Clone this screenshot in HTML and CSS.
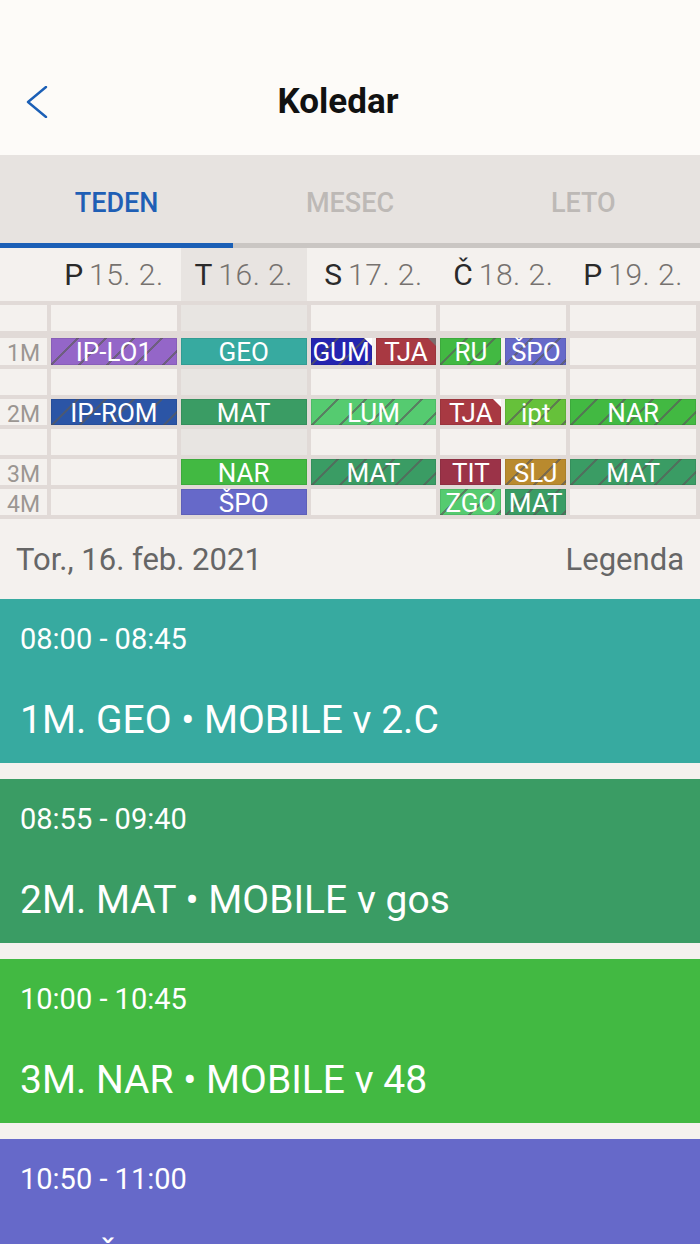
FILE: index.html
```html
<!DOCTYPE html>
<html lang="sl">
<head>
<meta charset="utf-8">
<title>Koledar</title>
<link rel="stylesheet" href="styles.css">
</head>
<body>
<div class="screen">
  <header class="appbar">
    <svg class="back" viewBox="0 0 22 32" width="22" height="32" aria-hidden="true"><path d="M20 1 L2 16 L20 31" fill="none" stroke="#1b5fb6" stroke-width="2.4" stroke-linecap="round" stroke-linejoin="round"/></svg>
    <h1 class="title">Koledar</h1>
  </header>

  <nav class="tabs">
    <div class="tab active">TEDEN</div>
    <div class="tab">MESEC</div>
    <div class="tab">LETO</div>
  </nav>
  <div class="indicator"><div class="indicator-bar"></div></div>

  <div class="days">
    <div class="day-spacer"></div>
    <div class="day"><b>P</b> <span>15. 2.</span></div>
    <div class="day selected"><b>T</b> <span>16. 2.</span></div>
    <div class="day"><b>S</b> <span>17. 2.</span></div>
    <div class="day"><b>Č</b> <span>18. 2.</span></div>
    <div class="day"><b>P</b> <span>19. 2.</span></div>
  </div>

  <div class="grid">
    <!-- row 1 (empty) -->
    <div class="lbl first"></div>
    <div class="cell first"></div>
    <div class="cell first sel"></div>
    <div class="cell first"></div>
    <div class="cell first"></div>
    <div class="cell first"></div>

    <!-- row 1M -->
    <div class="lbl">1M</div>
    <div class="cell lesson c-purple hatch">IP-LO1</div>
    <div class="cell lesson c-teal">GEO</div>
    <div class="cell split">
      <div class="lesson c-navy hatch corner-white">GUM</div>
      <div class="lesson c-red corner-gray">TJA</div>
    </div>
    <div class="cell split">
      <div class="lesson c-green hatch">RU</div>
      <div class="lesson c-violet hatch">ŠPO</div>
    </div>
    <div class="cell"></div>

    <!-- row empty -->
    <div class="lbl"></div>
    <div class="cell"></div>
    <div class="cell sel"></div>
    <div class="cell"></div>
    <div class="cell"></div>
    <div class="cell"></div>

    <!-- row 2M -->
    <div class="lbl">2M</div>
    <div class="cell lesson c-blue hatch">IP-ROM</div>
    <div class="cell lesson c-dgreen">MAT</div>
    <div class="cell lesson c-lgreen hatch">LUM</div>
    <div class="cell split">
      <div class="lesson c-red corner-white">TJA</div>
      <div class="lesson c-lime hatch">ipt</div>
    </div>
    <div class="cell lesson c-green hatch">NAR</div>

    <!-- row empty -->
    <div class="lbl"></div>
    <div class="cell"></div>
    <div class="cell sel"></div>
    <div class="cell"></div>
    <div class="cell"></div>
    <div class="cell"></div>

    <!-- row 3M -->
    <div class="lbl">3M</div>
    <div class="cell"></div>
    <div class="cell lesson c-green">NAR</div>
    <div class="cell lesson c-dgreen hatch">MAT</div>
    <div class="cell split">
      <div class="lesson c-crimson">TIT</div>
      <div class="lesson c-gold hatch">SLJ</div>
    </div>
    <div class="cell lesson c-dgreen hatch">MAT</div>

    <!-- row 4M -->
    <div class="lbl">4M</div>
    <div class="cell"></div>
    <div class="cell lesson c-violet">ŠPO</div>
    <div class="cell"></div>
    <div class="cell split">
      <div class="lesson c-lgreen hatch">ZGO</div>
      <div class="lesson c-dgreen hatch">MAT</div>
    </div>
    <div class="cell"></div>
  </div>

  <div class="daterow">
    <span>Tor., 16. feb. 2021</span>
    <span>Legenda</span>
  </div>

  <div class="cards">
    <div class="card c-teal">
      <div class="card-time">08:00 - 08:45</div>
      <div class="card-title">1M. GEO • MOBILE v 2.C</div>
    </div>
    <div class="card c-dgreen">
      <div class="card-time">08:55 - 09:40</div>
      <div class="card-title">2M. MAT • MOBILE v gos</div>
    </div>
    <div class="card c-green">
      <div class="card-time">10:00 - 10:45</div>
      <div class="card-title">3M. NAR • MOBILE v 48</div>
    </div>
    <div class="card c-violet">
      <div class="card-time">10:50 - 11:00</div>
      <div class="card-title">4M. ŠPO • MOBILE v TV</div>
    </div>
  </div>
</div>
</body>
</html>
```

FILE: styles.css
```css
* { box-sizing: border-box; }

html, body {
  margin: 0;
  padding: 0;
  background: #f4f1ee;
}

body {
  font-family: Roboto, "Noto Sans", "Liberation Sans", sans-serif;
  width: 700px;
  height: 1244px;
  overflow: hidden;
}

.screen {
  width: 700px;
}

/* App bar */
.appbar {
  height: 155px;
  padding: 48px 0 0 26px;
  background: #fdfbf8;
  display: flex;
  align-items: center;
}

.back {
  display: block;
  flex: none;
}

.title {
  flex: 1;
  margin: 0;
  padding-right: 72px;
  text-align: center;
  font-size: 35px;
  font-weight: 700;
  color: #111;
}

/* Tabs */
.tabs {
  height: 88px;
  background: #e7e3e0;
  display: flex;
  padding-top: 8px;
}

.tab {
  flex: 1;
  display: flex;
  align-items: center;
  justify-content: center;
  font-size: 27px;
  font-weight: 500;
  color: #bdb9b6;
}

.tab.active {
  color: #1f5fb5;
}

.indicator {
  height: 5px;
  background: #cac6c3;
}

.indicator-bar {
  width: 233px;
  height: 5px;
  background: #1b5fb6;
}

/* Day header */
.days {
  height: 53px;
  display: grid;
  grid-template-columns: 47px repeat(5, 1fr);
  column-gap: 4px;
  padding-right: 4px;
  background: #f4f1ee;
}

.day {
  display: flex;
  align-items: center;
  justify-content: center;
  gap: 6px;
  font-size: 30px;
  white-space: nowrap;
}

.day b {
  font-weight: 400;
  color: #2a2a2a;
}

.day span {
  font-weight: 300;
  color: #76726f;
  letter-spacing: 0.5px;
}

.day.selected {
  background: #e8e4e1;
}

/* Timetable grid */
.grid {
  display: grid;
  grid-template-columns: 47px repeat(5, 1fr);
  grid-template-rows: 29px 27px repeat(5, 26px);
  gap: 4px;
  padding: 4px 4px 4px 0;
  background: #e1dad7;
}

.lbl {
  background: #f4f1ee;
  font-size: 23px;
  color: #9b9692;
  display: flex;
  align-items: center;
  justify-content: center;
  padding-top: 4px;
}

.cell {
  background: #f4f1ee;
}

.cell.sel {
  background: #e8e5e2;
}

.first {
  height: 26px;
}

.lesson {
  position: relative;
  display: flex;
  align-items: center;
  justify-content: center;
  color: #fff;
  font-size: 26px;
  line-height: 26px;
  padding-top: 1px;
  white-space: nowrap;
  box-shadow: inset 0 0 0 1px rgba(0, 0, 0, 0.08);
}

.cell.split {
  display: flex;
  gap: 4px;
  background: #f4f1ee;
}

.split .lesson {
  flex: 1;
  min-width: 0;
}

.hatch {
  background-image: repeating-linear-gradient(135deg,
    transparent 0 18px,
    rgba(90, 90, 90, 0.65) 18px 19.8px);
}

.corner-white::after,
.corner-gray::after {
  content: "";
  position: absolute;
  top: 0;
  right: 0;
  width: 0;
  height: 0;
  border-style: solid;
  border-width: 0 8px 8px 0;
}

.corner-white::after {
  border-color: transparent #ffffff transparent transparent;
}

.corner-gray::after {
  border-color: transparent #7a6e6e transparent transparent;
}

/* Colours */
.c-purple { background-color: #9466c8; }
.c-teal { background-color: #37aaa0; }
.c-navy { background-color: #2424b0; }
.c-red { background-color: #a83942; }
.c-green { background-color: #42b942; }
.c-violet { background-color: #6669c9; }
.c-blue { background-color: #2b55a6; }
.c-dgreen { background-color: #3a9c64; }
.c-lgreen { background-color: #55cb70; }
.c-lime { background-color: #66c13a; }
.c-crimson { background-color: #9b3348; }
.c-gold { background-color: #b98a2e; }

/* Date row */
.daterow {
  height: 80px;
  display: flex;
  align-items: center;
  justify-content: space-between;
  padding: 0 16px;
  font-size: 31px;
  color: #666;
  background: #f4f1ee;
}

/* Cards */
.cards {
  display: flex;
  flex-direction: column;
  gap: 16px;
}

.card {
  height: 164px;
  color: #fff;
  padding: 22px 20px 0;
  flex: none;
}

.card-time {
  font-size: 29px;
  line-height: 36px;
}

.card-title {
  margin-top: 40px;
  font-size: 39px;
  line-height: 46px;
  white-space: nowrap;
}
```
